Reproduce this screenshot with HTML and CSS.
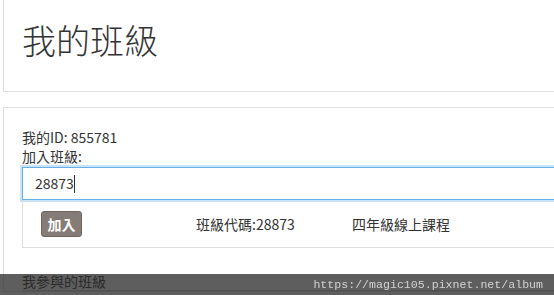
FILE: index.html
```html
<!DOCTYPE html>
<html>
<head>
  <link rel="stylesheet" href="styles.css">
</head>
<body>
  <div class="page">
    <div class="panel header-panel">
      <h1 class="title">我的班級</h1>
    </div>

    <div class="panel">
      <div class="my-id">我的ID: 855781</div>
      <div class="join-label">加入班級:</div>
      <div class="code-input">28873<span class="caret"></span></div>

      <div class="result-row">
        <button class="join-button">加入</button>
        <span class="result-code">班級代碼:28873</span>
        <span class="result-name">四年級線上課程</span>
      </div>

      <h2 class="section-title">我參與的班級</h2>
    </div>
  </div>

  <div class="watermark">https://magic105.pixnet.net/album</div>
</body>
</html>
```

FILE: styles.css
```css
:root {
  --text-primary: #333;
  --border-light: #ddd;
  --focus-blue: #66afe9;
  --button-brown: #857b77;
}

body {
  margin: 0;
  overflow: hidden;
  font-family: "Noto Sans CJK TC", "Noto Sans", sans-serif;
  font-size: 14px;
  color: var(--text-primary);
  background: white;
}

.page {
  width: 640px;
  padding-left: 3px;
}

.panel {
  border: 1px solid var(--border-light);
  border-right: none;
  padding: 20px 0 0 18px;
}

.header-panel {
  border-top: none;
  padding: 21px 0 33px 18px;
  margin-bottom: 15px;
}

.title {
  margin: 0;
  font-size: 34px;
  font-weight: 300;
  line-height: 37px;
}

.my-id,
.join-label {
  line-height: 19px;
}

.code-input {
  box-sizing: border-box;
  height: 33px;
  margin-top: 1px;
  padding: 0 12px;
  border: 1px solid var(--focus-blue);
  box-shadow: 0 0 0 2px rgba(102, 175, 233, 0.35);
  line-height: 30px;
}

.caret {
  display: inline-block;
  width: 1px;
  height: 18px;
  vertical-align: -4px;
  background: var(--text-primary);
}

.result-row {
  display: grid;
  grid-template-columns: 155px 156px auto;
  align-items: center;
  height: 47px;
  padding-left: 18px;
  border: 1px solid var(--border-light);
  border-top: none;
  border-right: none;
  line-height: 18px;
}

.join-button {
  justify-self: start;
  width: 41px;
  height: 26px;
  padding: 0;
  border: 1px solid #6f6662;
  border-radius: 3px;
  background: var(--button-brown);
  color: white;
  font-family: inherit;
  font-size: 14px;
  font-weight: 700;
  line-height: 24px;
}

.section-title {
  margin: 24px 0 0;
  font-size: 14px;
  font-weight: 400;
  line-height: 18px;
  border-bottom: 1px solid #ccc;
}

.watermark {
  position: fixed;
  left: 0;
  right: 0;
  bottom: 0;
  height: 21px;
  padding-right: 11px;
  background: rgba(40, 40, 40, 0.75);
  color: #d2d2d2;
  font-family: "Liberation Mono", monospace;
  font-size: 11.6px;
  line-height: 21px;
  text-align: right;
}
```
